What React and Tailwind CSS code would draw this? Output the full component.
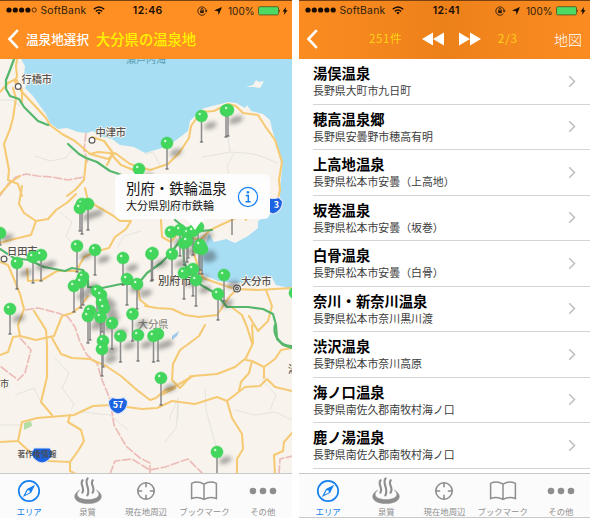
import React from "react";

const JP = "font-['Noto_Sans_CJK_JP',sans-serif]";

function StatusBar({ time, full }) {
  return (
    <div className="grid h-[20px] grid-cols-[1fr_auto_1fr] items-center border-t border-[#7a4211] pl-[5.5px] pr-[4px] font-['Inter',sans-serif] text-[10px] leading-none text-[#2b1a0b]">
      <div className="flex items-center">
        <svg width="32" height="8" viewBox="0 0 32 8" fill="#160c04">
          {[3, 9.3, 15.6, 21.9].map((x) => (
            <circle key={x} cx={x} cy="4" r="2.6" />
          ))}
          <circle cx="28.2" cy="4" r={full ? 2.6 : 2.1} fill={full ? "#160c04" : "none"} stroke="#160c04" strokeWidth={full ? 0 : 0.7} />
        </svg>
        <span className="ml-[3px] w-[47px] whitespace-nowrap text-[10.3px] tracking-[0.25px]">SoftBank</span>
        <svg className="ml-[5px]" width="12" height="9" viewBox="0 0 12 9" fill="none" stroke="#160c04" strokeWidth="1.5">
          <path d="M.8 3.3Q6-1.4 11.2 3.3" />
          <path d="M2.8 5.5Q6 2.6 9.2 5.5" />
          <path d="M4.3 6.6Q6 5.2 7.7 6.6L6 8.5Z" fill="#160c04" stroke="none" />
        </svg>
      </div>
      <span className="pl-[2px] pt-px text-[10.5px] font-semibold tracking-[0.35px] text-[#160c04]">{time}</span>
      <div className="flex items-center justify-end">
        <svg width="11" height="10" viewBox="0 0 11 10" fill="none" stroke="#2b1a0b" strokeWidth=".9">
          <path d="M8.5 7.4A4.2 4.2 0 1 1 9.2 5" />
          <path d="M7.6 4.6h3l-1.5 1.9z" fill="#2b1a0b" stroke="none" />
          <rect x="3.2" y="4.4" width="3.6" height="2.7" fill="#2b1a0b" stroke="none" />
          <path d="M3.8 4.5v-.8a1.2 1.2 0 0 1 2.4 0v.8" />
        </svg>
        <svg className="ml-[6px]" width="8" height="8" viewBox="0 0 8 8">
          <path d="M8 0L4.6 8 4 4.2 0 3.6Z" fill="#160c04" />
        </svg>
        <span className="ml-[6px] w-[27px] whitespace-nowrap">100%</span>
        <svg className="ml-[3px]" width="23" height="10" viewBox="0 0 23 10">
          <rect x=".5" y=".7" width="20" height="8.2" rx="1.2" fill="#4cd964" stroke="#5a5a20" strokeWidth=".9" />
          <path d="M21.4 3.2q1.4 1.6 0 3.2z" fill="#2b1a0b" />
        </svg>
        <svg className="ml-[1px]" width="6" height="8" viewBox="0 0 6 8">
          <path d="M4 0L.5 4.5h2L1.8 8 5.6 3.3h-2z" fill="#160c04" />
        </svg>
      </div>
    </div>
  );
}

function BackChevron() {
  return (
    <svg width="13" height="20" viewBox="0 0 13 20" fill="none" stroke="#fff" strokeWidth="2.6">
      <path d="M10.8 1.2L2.4 10l8.4 8.8" />
    </svg>
  );
}

function TabIcon({ name }) {
  if (name === "area")
    return (
      <svg width="24" height="24" viewBox="0 0 24 24" fill="none" stroke="#1480f0" strokeWidth="1.7">
        <circle cx="12" cy="12" r="10.2" />
        <path d="M16.9 7.1L13.6 13.7 7.1 16.9 10.4 10.4Z" strokeWidth="1.1" />
        <path d="M16.9 7.1L13.6 13.7 10.4 10.4Z" fill="#1480f0" stroke="none" />
        <circle cx="12" cy="12" r=".8" fill="#fff" stroke="none" />
      </svg>
    );
  if (name === "spa")
    return (
      <svg width="30" height="28" viewBox="0 0 30 28" fill="none" stroke="#8e8e8e" strokeLinecap="round">
        <path d="M6.6 13.2C-2 17.6.5 26.6 15 26.6S32 17.6 23.4 13.2C28.6 17.5 25.5 22.6 15 22.6S1.4 17.5 6.6 13.2Z" fill="#8e8e8e" strokeWidth=".5" />
        <path d="M9.6 3.2c-3.4 4 2.6 7.4-.2 12.4M14.6 1.4c-4 5 3.4 9.6-.2 17M19.8 3.2c-3.4 4 3.2 7.4-.2 12.4" strokeWidth="2.1" />
      </svg>
    );
  if (name === "here")
    return (
      <svg width="20" height="20" viewBox="0 0 20 20" fill="none" stroke="#8e8e8e" strokeWidth="1.6">
        <circle cx="10" cy="10" r="8.2" />
        <path d="M10 1.8v4.4M10 13.8v4.4M1.8 10h4.4M13.8 10h4.4" />
      </svg>
    );
  if (name === "book")
    return (
      <svg width="28" height="20" viewBox="0 0 28 20" fill="none" stroke="#8e8e8e" strokeWidth="1.5">
        <path d="M14 3.2Q7.8-.6 1.6 2.4V17.6Q7.8 15 14 18.4 20.2 15 26.4 17.6V2.4Q20.2-.6 14 3.2ZM14 3.2V18.4" />
      </svg>
    );
  return (
    <svg width="28" height="8" viewBox="0 0 28 8" fill="#8e8e8e">
      <circle cx="4" cy="4" r="3.3" />
      <circle cx="14" cy="4" r="3.3" />
      <circle cx="24" cy="4" r="3.3" />
    </svg>
  );
}

const tabs = [
  ["area", "エリア"],
  ["spa", "泉質"],
  ["here", "現在地周辺"],
  ["book", "ブックマーク"],
  ["more", "その他"],
];

function TabBar() {
  return (
    <nav className="grid h-[45px] shrink-0 grid-cols-5 border-t border-[#c9c9c9] bg-[#fbfbfb]">
      {tabs.map(([name, label]) => (
        <div key={name} className="flex flex-col items-center">
          <div className="flex h-[33px] items-center justify-center">
            <TabIcon name={name} />
          </div>
          <span className={"whitespace-nowrap text-[8.4px] leading-[8px] " + (name === "area" ? "text-[#1480f0]" : "text-[#8e8e8e]")}>{label}</span>
        </div>
      ))}
    </nav>
  );
}

const yellowRoads = [
  "M17 59L16 66 17 76 15 82 22 92 36 107 46 118 50 125 62 134 75 141 90 154 108 159 115 153 130 164 150 170 168 164 179 153 189 138 191 126 201 112 214 111 228 104 236 106 243 113 258 115 265 126 275 140 282 162 279 180 280 190 277 202",
  "M13 88L16 98 13 118 10 129 4 144 9 170 8 180 18 184 22 196",
  "M0 92L8 83 16 79 22 90 22 104M0 194L11 182 20 176",
  "M90 154L98 152 110 153 121 165 136 171M86 160L84 180 75 190 67 196M92 137L104 141 113 153 107 165",
  "M22 186L19 204 24 213 36 221 48 219 56 210 68 202 76 194M36 221L31 235 14 239 0 243",
  "M85 188L88 201 100 208 112 215 120 221 131 221 126 229 115 237 109 248 98 251 84 257 78 268",
  "M0 262L8 265 14 279 20 294 24 309 18 325 20 336M27 269L28 281 42 280 57 271 78 271",
  "M0 355L8 352 13 337 20 336 36 340 54 336 62 316 72 313 81 306 88 296M34 311L46 330 47 345 47 377 41 402 52 415",
  "M52 338L61 354 72 358 90 359 106 366 121 376 137 390 150 400 156 398 165 390 174 387 193 376 217 374 235 367 246 358 253 343 252 325",
  "M0 442L18 441 22 422 37 418 74 415 93 406 112 405 142 409 157 408 172 401 195 404 217 397 227 401 245 387 260 386 267 379 275 387 292 391",
  "M18 441L31 453 48 461 70 462 70 471 76 474M70 415L68 422 81 430 84 441 78 451 70 462",
  "M227 401L232 418 242 434 243 449 237 459 237 474M246 360L252 361 264 367 275 359 281 350 292 348M264 367L264 378M252 361L249 373 241 382 239 391",
  "M145 306L157 308 172 309 185 315 199 317 217 315 230 296 237 289 258 290 292 288",
  "M205 325L199 336 187 345 180 350 173 364 172 380 180 388 191 376M230 306L242 315 247 327 252 343",
  "M161 220L162 237 171 242 178 233 187 236 200 240 210 230 225 223 236 218 243 211 246 220",
  "M193 251L198 266 203 278 214 282 232 288M161 395L175 388M137 284L140 300 148 306",
  "M292 433L284 442 283 451 274 455 275 474M249 316L258 331 268 321 272 306 266 290",
];

const greenRoads = [
  "M14 59L10 70 6 80 6 89 10 96 19 99 24 107 38 121 48 125",
  "M68 144L79 154 86 158 97 162 110 171 122 175 145 190",
  "M0 249L14 258 29 260 44 267 65 271 72 268 83 270 88 280 88 287 102 288 121 284 138 284 147 273 161 263 170 254 176 246 183 238 185 228 175 220",
  "M183 245L184 262 190 275 201 285 215 293 222 301 227 307 248 307 263 309 273 314 276 325 277 339 283 345 292 348",
  "M188 236L201 231 212 230",
  "M275 325A17 17 0 0 0 292 346",
];

const railroads = [
  "M0 196L8 184 16 177 26 174 38 176 52 177 68 180 84 177",
  "M86 133L84 150 88 163",
  "M25 310L38 308 58 313 68 317 75 327 80 342 87 355 97 363 102 380 110 399 114 425 126 446 140 458 150 463 150 473",
  "M20 338L31 350 25 373 18 380 0 366",
  "M110 474L115 461 132 459 150 470 165 467 188 459 203 474M279 474L280 459 292 456",
];

const pins = [
  [201.5, 116, 142], [226, 110.5, 137], [228, 110, 136], [167, 143, 169], [139, 169, 190],
  [0, 233, 245], [88, 204, 230], [82, 204, 234], [80, 208, 231],
  [77, 246, 272], [95, 250, 275], [41, 255, 281], [33, 257, 283], [17, 263, 289],
  [123, 258, 285], [151.5, 254, 281], [152.5, 253, 280], [172, 254, 280],
  [171, 232, 258], [180, 230, 256], [188, 233, 258], [198, 227, 252], [193, 231, 255],
  [184, 243, 265], [187, 241, 262], [199, 248, 274], [202, 249, 274], [200, 245, 270],
  [193, 269, 296], [184, 273, 299], [196, 280, 306], [224, 275, 301], [218, 294, 320],
  [83, 277, 305], [81, 282, 308], [74, 286, 312], [127, 279, 305], [137, 284, 309],
  [97, 291, 320], [101, 295, 324], [102, 302, 332], [104, 308, 338],
  [90, 311, 340], [88, 316, 343], [100.5, 317, 345], [10, 309, 334],
  [132.5, 314, 341], [112, 323, 349], [120.5, 336, 362], [138, 335, 361],
  [103, 341, 367], [102, 349, 376], [158, 334, 361], [153.5, 336, 362],
  [161, 378, 405], [217, 452, 474], [295, 293, 318],
];

function Shield({ x, y, label, dx = 0 }) {
  return (
    <g transform={`translate(${x} ${y})`}>
      <path d="M-6-7.5Q0-5.5 6-7.5L9.5-4Q10 6 0 9-10 6-9.5-4Z" fill="#1b63e0" stroke="#dfe6fb" strokeWidth="1.1" />
      <text x={dx} y="2.6" textAnchor="middle" fill="#fff" fontSize="9" fontWeight="700">{label}</text>
    </g>
  );
}

function MapView() {
  return (
    <svg className="block h-full w-full" viewBox="0 59 292 414" fontFamily="'Noto Sans CJK JP', sans-serif">
      <defs>
        <filter id="soft" x="-50%" y="-50%" width="200%" height="200%">
          <feGaussianBlur stdDeviation="2.2" />
        </filter>
      </defs>
      <rect y="59" width="292" height="414" fill="#f8f4ed" />
      <path d="M21 59L25 66 24 74 28 81 25 88 33 96 40 106 46 114 50 123 58 129 67 128 78 132 87 133 93 131 100 136 112 139 120 145 134 147 145 153 162 148 175 141 188 131 190 121 196 115 202 109 212 106 221 104 228 102 236 103 245 108 247 105 251 111 263 114 270 120 272 129 278 149 282 169 280 189 280 205 270 214 258 221 258 228 248 236 235 243 226 239 214 242 209 234 205 245 198 257 198 269 204 275 218 281 235 283 258 282 272 278 276 285 285 287 292 291V59Z" fill="#a8def4" />
      <path d="M246 87L253 85 256 80 259 82 264 81 260 88 254 87Z" fill="#f8f4ed" />
      <path d="M24 423L31 421 32 426 24 430Z" fill="#b4dca5" />
      <path d="M172 336l7-5-2 5-5 4z" fill="#9fc8ea" />
      <g fill="none" stroke="#dedbd5" strokeWidth=".7">
        <path d="M0 100H12L20 106M35 156L50 161 66 158 73 148M60 212L72 222 66 236 74 246M117 248L124 236 141 231M145 154L153 152 160 165M228 137L230 152 215 155 202 157M230 152L246 153 258 155 278 163M234 153L227 166 229 175M55 358L69 373 62 388 74 404 71 410M0 425H22M82 412L110 415 128 430M178 420L178 398 169 420M205 389L206 410 212 432 216 446M235 410L255 415 275 412 292 420M15 395L34 388 41 402M165 442L176 428 178 404M262 380L276 395 270 410" />
      </g>
      <g fill="none" stroke="#edbcb9" strokeWidth="1.7" strokeLinejoin="round" strokeDasharray="9 1.5">
        {railroads.map((d) => <path key={d} d={d} />)}
      </g>
      <g fill="none" stroke="#f6ca74" strokeWidth="2.1" strokeLinejoin="round" strokeLinecap="round">
        {yellowRoads.map((d) => <path key={d} d={d} />)}
      </g>
      <g fill="none" stroke="#55b76c" strokeWidth="2.2" strokeLinejoin="round" strokeLinecap="round">
        {greenRoads.map((d) => <path key={d} d={d} />)}
      </g>

      <g fill="#55524f" fontSize="10.2" fontWeight="500" stroke="#fbf8f1" strokeWidth="1.6" paintOrder="stroke" strokeLinejoin="round">
        <text x="21.5" y="82.5">行橋市</text>
        <text x="95.5" y="136">中津市</text>
        <text x="7" y="255">日田市</text>
        <text x="241" y="285">大分市</text>
        <text x="158" y="284.5" fontSize="11.3">別府市</text>
        <text x="0" y="386.5" fontSize="9">市</text>
        <text x="138" y="328" fill="#94908b">大分県</text>
        <text x="288" y="373">湯</text>
      </g>
      <text x="126" y="63" fill="#5f9fb4" fontSize="10">瀬戸内海</text>
      <g fill="#fff" stroke="#5d5a57" strokeWidth="1.2">
        <circle cx="18.2" cy="86.5" r="2.9" />
        <circle cx="92" cy="140.2" r="2.9" />
        <circle cx="4" cy="259" r="2.9" />
        <circle cx="237" cy="288.5" r="3.4" />
        <circle cx="237" cy="288.5" r="1.3" />
      </g>
      <Shield x={118} y={405} label="57" />
      <Shield x={273} y={205} label="3" dx={3.5} />
      <g transform="translate(42 455)">
        <path d="M-8-7H8L11-1Q7 7 0 8-7 7-11-1Z" fill="#1b63e0" stroke="#dfe6fb" />
      </g>
      <text x="17.5" y="456.5" fill="#4e4b48" fontSize="7.8" fontWeight="500">著作権情報</text>

      <g fill="#2f2f2f" opacity=".4" filter="url(#soft)">
        {pins.map(([x, y, b], i) => (
          <ellipse key={i} cx={x + 9} cy={y + (b - y) * 0.37} rx="6.5" ry="3.4" transform={`rotate(-20 ${x + 9} ${y + 10})`} />
        ))}
      </g>
      {pins.map(([x, y, b], i) => (
        <g key={i}>
          <path d={`M${x} ${y}V${b}`} stroke="#8b8b8b" strokeWidth="1.5" />
          <path d={`M${x - 1.6} ${b}h3.2`} stroke="#555" strokeWidth="1" />
        </g>
      ))}
      <path d="M232 214V235" stroke="#8b8b8b" strokeWidth="1.5" />
      {pins.map(([x, y], i) => (
        <g key={i}>
          <circle cx={x} cy={y} r="6.1" fill="#43d65d" stroke="#3bcb55" strokeWidth=".4" />
          <circle cx={x - 1.8} cy={y - 2} r="1.2" fill="#d4ffd9" />
        </g>
      ))}
    </svg>
  );
}

function Callout() {
  return (
    <div className="absolute left-[115px] top-[115px] flex h-[45px] w-[155px] items-center justify-between rounded-[6px] bg-[#fdfdfd] pl-[11px] pr-[11px]">
      <div className="whitespace-nowrap pb-[2px] text-[#141414]">
        <div className="text-[14.4px] leading-[19px]">別府・鉄輪温泉</div>
        <div className="text-[11px] leading-[17px]">大分県別府市鉄輪</div>
      </div>
      <svg width="22" height="22" viewBox="0 0 22 22" fill="none" stroke="#1480f0">
        <circle cx="11" cy="11" r="9.6" strokeWidth="1.2" />
        <circle cx="10.9" cy="6.3" r="1.3" fill="#1480f0" stroke="none" />
        <path d="M8.8 9.4h2.5v6.3M8.5 15.8h5.2" strokeWidth="1.5" />
      </svg>
      <svg className="absolute left-[69px] top-[44.5px]" width="22" height="12" viewBox="0 0 22 12">
        <path d="M0 0H22Q18 0 11 11 4 0 0 0Z" fill="#fdfdfd" />
      </svg>
    </div>
  );
}

const springs = [
  ["湯俣温泉", "長野県大町市九日町"],
  ["穂高温泉郷", "長野県安曇野市穂高有明"],
  ["上高地温泉", "長野県松本市安曇（上高地）"],
  ["坂巻温泉", "長野県松本市安曇（坂巻）"],
  ["白骨温泉", "長野県松本市安曇（白骨）"],
  ["奈川・新奈川温泉", "長野県松本市奈川黒川渡"],
  ["渋沢温泉", "長野県松本市奈川高原"],
  ["海ノ口温泉", "長野県南佐久郡南牧村海ノ口"],
  ["鹿ノ湯温泉", "長野県南佐久郡南牧村海ノ口"],
];

export default function App() {
  return (
    <div className={"flex h-[518px] w-[590px] gap-[7px] overflow-hidden bg-white " + JP}>
      <section className="flex w-[292px] shrink-0 flex-col">
        <header className="h-[59px] shrink-0 bg-[#ff8f22]">
          <StatusBar time="12:46" />
          <div className="flex h-[38px] items-center pl-[7px]">
            <BackChevron />
            <span className="ml-[6px] w-[63px] whitespace-nowrap text-[12.6px] font-medium leading-none text-white">温泉地選択</span>
            <span className="ml-[7px] whitespace-nowrap text-[14.3px] font-medium leading-none text-[#fff200]">大分県の温泉地</span>
          </div>
        </header>
        <main className="relative h-[414px] shrink-0 overflow-hidden">
          <MapView />
          <Callout />
        </main>
        <TabBar />
      </section>

      <section className="flex w-[291px] shrink-0 flex-col">
        <header className="h-[59px] shrink-0 bg-linear-to-r from-[#fb8c22] via-[#ed8119] to-[#fb8c22]">
          <StatusBar time="12:41" full />
          <div className="flex h-[38px] items-center pl-[7px] pr-[8px]">
            <BackChevron />
            <span className="ml-[50px] w-[36px] whitespace-nowrap pb-px text-[11.5px] leading-none tracking-[0.6px] text-[#ffd21a]">251件</span>
            <svg className="ml-[17px]" width="22" height="14" viewBox="0 0 22 14" fill="#fff">
              <path d="M11 .5V13.5L0 7ZM22 .5V13.5L11 7Z" />
            </svg>
            <svg className="ml-[15px]" width="22" height="14" viewBox="0 0 22 14" fill="#fff">
              <path d="M0 .5V13.5L11 7ZM11 .5V13.5L22 7Z" />
            </svg>
            <span className="ml-[17px] whitespace-nowrap pb-px text-[11.5px] leading-none tracking-[0.8px] text-[#ffd21a]">2/3</span>
            <span className="ml-auto whitespace-nowrap pb-px text-[14px] font-light leading-none text-white">地図</span>
          </div>
        </header>
        <main className="h-[414px] shrink-0 overflow-hidden bg-white">
          {springs.map(([name, place]) => (
            <div key={name} className="ml-[14px] flex h-[45.5px] items-center justify-between border-b border-[#d5d5d5] pr-[14px]">
              <div className="whitespace-nowrap">
                <div className="text-[14.3px] font-bold leading-[19px] text-black">{name}</div>
                <div className="text-[10.9px] leading-[17px] text-[#3c3c3c]">{place}</div>
              </div>
              <svg width="8" height="13" viewBox="0 0 8 13" fill="none" stroke="#bdbdc2" strokeWidth="1.5">
                <path d="M1.2 1.2L6.5 6.5 1.2 11.8" />
              </svg>
            </div>
          ))}
        </main>
        <div className="border-b border-[#c9c9c9] [&>nav]:h-[44px]">
          <TabBar />
        </div>
      </section>
    </div>
  );
}
